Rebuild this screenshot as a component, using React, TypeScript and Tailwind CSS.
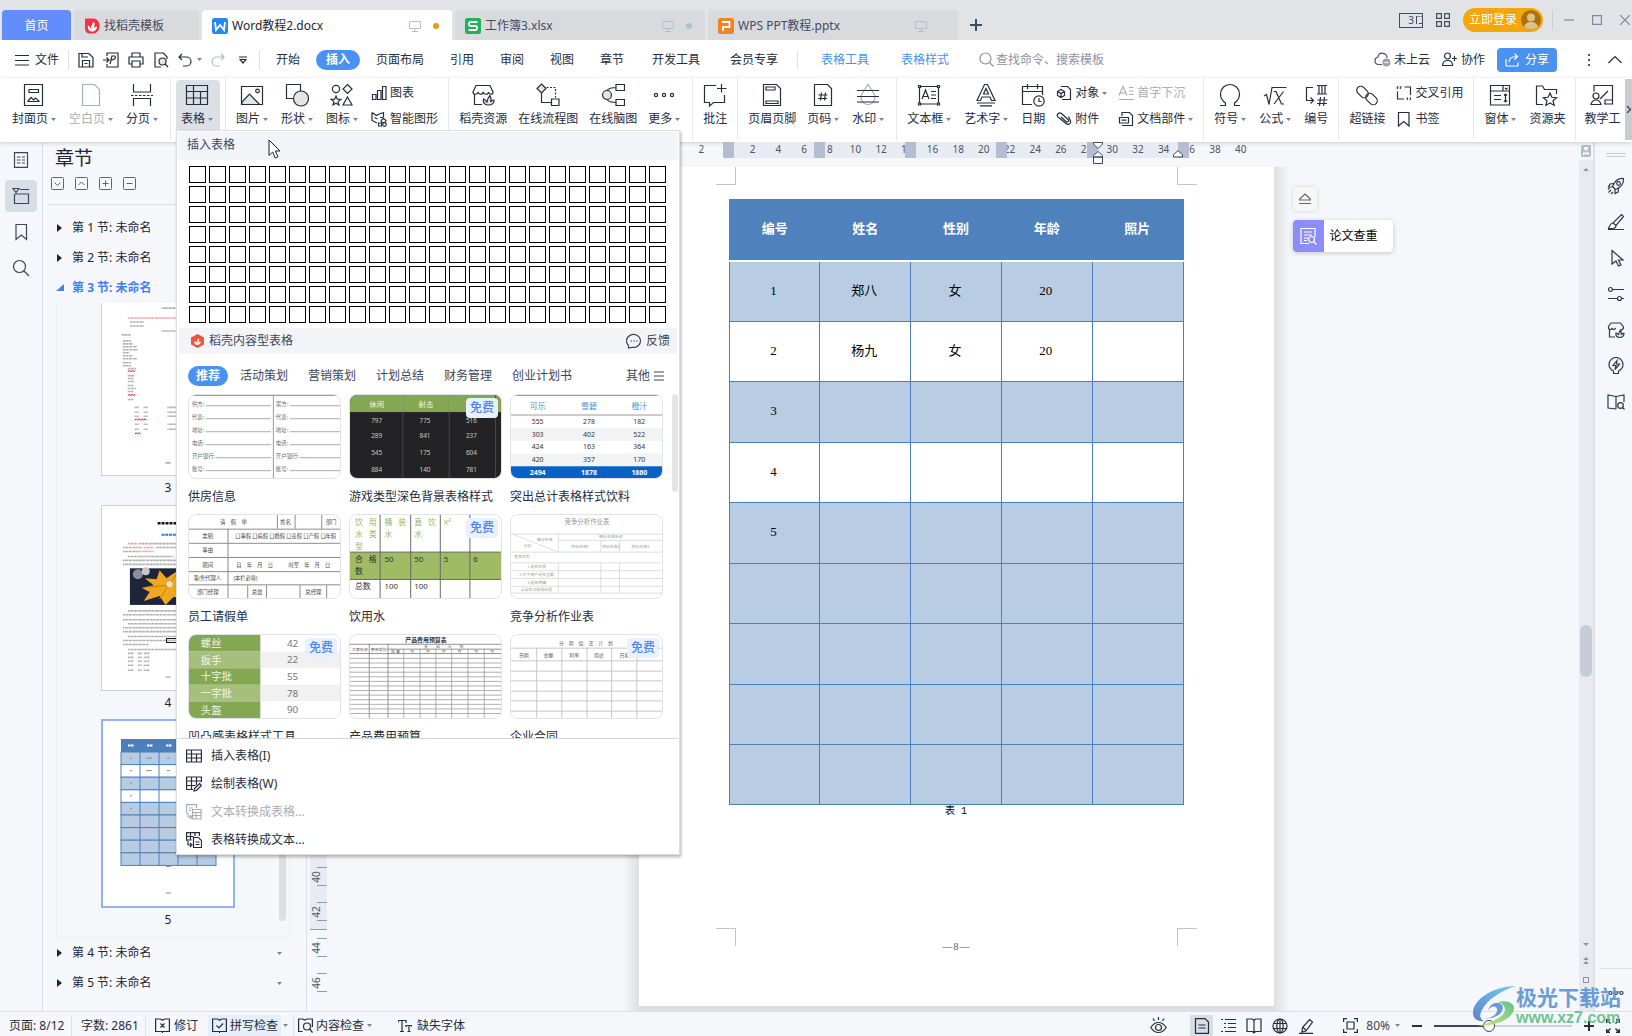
import React, { useState } from "react";
import type { ReactNode } from "react";

/* ---------- icon helper ---------- */

function Svg({ s = 16, v = 24, w = 1.2, children }: { s?: number; v?: number; w?: number; children: ReactNode }) {
  return (
    <svg width={s} height={s} viewBox={`0 0 ${v} ${v}`} fill="none" stroke="currentColor" strokeWidth={w} className="shrink-0" aria-hidden="true">
      {children}
    </svg>
  );
}

const G = "#e2e4e8";

const big: Record<string, ReactNode> = {
  cover: (<><path d="M2.500 1.500h18v21h-18z" /><path d="M7 6.500h9.500v3H7zM6 18l3-3.500 2.500 2.500 2-2 3.500 3v.5H6z" /></>),
  blank: <path d="M3.500 1.500h12l5 5v16h-17z" />,
  breakp: (<><path d="M3.500 1v8h17V1M3.500 23v-7.500h17V23" /><path d="M1 12.500h22" strokeDasharray="2.500 1.500" /></>),
  table: (<><path d="M1.500 2.500h21v19h-21zM1.500 8.500h21M1.500 15h21M8.500 2.500v19M15.500 8.500v13" /></>),
  image: (<><path d="M1.500 3.500h21v18h-21z" /><path d="M2 19l7.500-8 10 10.500H2z" fill={G} /><circle cx="17.500" cy="8" r="1.800" /></>),
  shape: (<><path d="M1.500 1.500h14v14h-14z" fill="#fff" /><circle cx="16" cy="15.500" r="7.500" fill={G} /></>),
  icons: (<><circle cx="6" cy="6" r="3.600" /><path d="M17.500 1.500l4.500 4.500-4.500 4.500L13 6zM17.500 14l4.500 8h-9zM6 13l1.300 3.200 3.500.2-2.700 2.200.9 3.400L6 20.200 3 22l.9-3.400L1.200 16.400l3.500-.2z" /></>),
  shop: (<><path d="M11 21.500H3.500V11M5 2.500h14l3 6.500c0 3-4 3-4.500 0 0 3-4.500 3-5.500 0 0 3-4.500 3-5 0-.5 3-5 3-5 0z" /><path d="M17 22c-4 0-5-3-4.500-6 2 .5 3 2 3.500 3.500 0-3 1-5 3-7 1 2 1.500 4 .5 6.500.8-1.200 2-2 3.500-2 .3 3-1.500 5-6 5z" fill={G} /></>),
  flow: (<><path d="M5.500 1l4.500 4.500-4.500 4.500L1 5.500z" fill={G} /><path d="M5.500 10v9.500H15" /><path d="M10.500 4.500h9v10" strokeDasharray="2 1.500" /><path d="M15.500 16h7.500v6.500h-7.500z" /></>),
  mind: (<><circle cx="6" cy="12" r="4.500" fill={G} /><path d="M6 7.500C8 5 11 4.500 15 4.500M6 16.500c2 2.500 5 3 9 3M15 1.500h8.500v6H15zM15 16.500h8.500v6H15z" /></>),
  more: (<><circle cx="4" cy="12" r="1.600" /><circle cx="12" cy="12" r="1.600" /><circle cx="20" cy="12" r="1.600" /></>),
  comment: <path d="M13 2.500H1.500v17h5V23l4-3.500h11V12M18.500 1v8.500M14 5.500h9.500" />,
  header: (<><path d="M3.500 1.500h13l4 4v17h-17z" /><path d="M6 4h9v3H6zM6 18h12v2.500H6z" /></>),
  pageno: (<><path d="M3.500 1.500h13l4 4v17h-17z" /><path d="M10.500 9.500l-1 8M14.500 9.500l-1 8M7.500 12h9M7 15.500h9" /></>),
  water: (<><path d="M12 1.500c3 5 7 9 7 13a7 7 0 0 1-14 0c0-4 4-8 7-13z" stroke="#aaafb8" /><path d="M1 7.500h22M1 13.500h22M1 19h22" /></>),
  textbox: (<><path d="M2.500 3.500h19v17.500h-19z" /><path d="M1.500 2.500h2v2h-2zM20.500 2.500h2v2h-2zM1.500 20h2v2h-2zM20.500 20h2v2h-2z" fill="#fff" /><path d="M5 16l3.500-9 3.500 9M6.200 13.500h4.600M14 8.500h5M14 12h5M14 15.500h5" /></>),
  wordart: (<><path d="M3 17.500L10.500 1.500h3L21 17.500h-3.500l-1.500-3.500H8l-1.500 3.500zM9.500 11h5L12 5.500z" /><path d="M3 20h18M6 22.800h12" /></>),
  date: (<><path d="M11 21.500H1.500v-18h20V12M1.500 8.500h20M6.500 1v5M16.500 1v5" /><circle cx="18" cy="18" r="5.200" /><path d="M18 15v3.500h2.500" /></>),
  omega: <path d="M2 22.500h5.500v-2.500C4.500 18 2.500 15 2.500 11a9.500 9.500 0 0 1 19 0c0 4-2 7-5 9v2.500H22" />,
  formula: (<><path d="M1 13l2.500-1.500L6 21.500 9 4.500h14.500" /><path d="M10.500 8.500h2.500l5.500 12.500H21M20.500 8.500L11 21" /></>),
  numlist: (<><path d="M9 4.500H2.500v13H9M6.500 14.500l3 3-3 3M13 2.500h10M13 11h10M15 2.500v8.500M18 2.500v8.500M21 2.500v8.500M16.500 14l-1 9M20.500 14l-1 9M13.500 17h10M13 20.500h10" /></>),
  link: (<><rect x="1" y="5" width="13" height="8" rx="4" transform="rotate(45 7.500 9)" /><rect x="10" y="12" width="13" height="8" rx="4" transform="rotate(45 16.500 16)" /></>),
  form: (<><path d="M2.500 2.500h19v19.500h-19zM2.500 8h19M15 2.500V8M17 5l1.200 1.200L19.500 5M6 12.500h7M6 16.500h7M17.500 11v8M16 12.500l1.500-1.500 1.500 1.500M16 17.500l1.500 1.500 1.500-1.500" /></>),
  resfolder: (<><path d="M8 21.500H1.500V3h6l2 3.500h12V11" /><path d="M15 10l1.900 4.300 4.700.4-3.600 3 1.200 4.700L15 20l-4.200 2.400 1.200-4.700-3.600-3 4.700-.4z" fill="#fff" /></>),
  teach: (<><path d="M4 8.500V2.500h18.500V21H14M1 21.500h10c-1-4-3-4.500-5-4.500s-4 .5-5 4.500zM10 16l8-8M15 21v-4h7" /><circle cx="6" cy="13" r="3" /></>),
};

const small: Record<string, ReactNode> = {
  chart: <path d="M1.500 9.500h3.500v5H1.500zM6.500 5.500h3.500v9H6.500zM11.500 1.500H15v13h-3.500z" />,
  smart: (<><path d="M1 1.500l4.500 3 3-1.500 4-1.500v5M1 1.500v8l5 2.500M3.500 6.500l3 1.500M9 6.500h3" /><path d="M10 9.500l2.500-2 2.500 2-1 2h-3zM7.500 12h3v3h-3z" /><circle cx="13.500" cy="13.500" r="1.800" /></>),
  object: (<><path d="M5 1.500h6.500l3 3v10H6" /><path d="M5 4.500l3.500 2v4L5 12.500 1.500 10.500v-4zM1.500 6.500L5 8.500l3.500-2M5 8.500v4" /></>),
  clip: <path d="M12.500 5.500l2 4.500c1 2.500-2.500 4.500-4.500 2.500L2 6c-2-2 1-5.500 3.500-3.500L12 8.500c1.500 1.500-.5 3.500-2 2L5 6" />,
  drop: <path d="M1 10.500L5 1.500l4 9M2.200 8h5.600M11 2.500h4.500M11 6h4.500M11 9.500h4.500M1 14.500h15" />,
  parts: <path d="M4 5V1.500h7.500l3 3v10H4M1.500 6.500h9v5.500h-9zM3.500 9.200h5" />,
  xref: <path d="M2.500 1.500C1 2 1 3 1.500 4M5.500 1.500C4 2 4 3 4.500 4M8.500 2h6v8M1.500 6.500v7.500H8M11 12.500c.8.500.5 1.500 0 2.500M14 12.500c.8.500.5 1.500 0 2.500" />,
  bookmark: <path d="M2.500 1.500h10.500v13.500l-5.200-4.500-5.300 4.500z" />,
};

const Caret = () => (
  <svg width="5" height="3" viewBox="0 0 5 3" className="shrink-0" aria-hidden="true"><path d="M0 0h5L2.500 3z" fill="#7b8496" /></svg>
);

function Big({ icon, label, caret, dim, on }: { icon: string; label: string; caret?: boolean; dim?: boolean; on?: boolean }) {
  const place = on ? "-mx-[5px] -mt-[3px] h-[56px] rounded-sm bg-[#dce0e6] pl-[5px] pr-[7px] pt-[3px]" : caret ? "pr-[2px]" : "";
  return (
    <button className={`flex shrink-0 flex-col items-center gap-1 whitespace-nowrap ${place} ${dim ? "text-[#a9adb5]" : "text-[#262d3d]"}`}>
      <Svg s={24}>{big[icon]}</Svg>
      <span className="flex items-center gap-[3px] leading-4">{label}{caret && <Caret />}</span>
    </button>
  );
}

function Small({ icon, label, caret, dim }: { icon: string; label: string; caret?: boolean; dim?: boolean }) {
  return (
    <button className={`flex items-center gap-[3px] whitespace-nowrap leading-4 ${dim ? "text-[#a9adb5]" : "text-[#262d3d]"}`}>
      <Svg s={16} v={16}>{small[icon]}</Svg>{label}{caret && <Caret />}
    </button>
  );
}

const Group = ({ children }: { children: ReactNode }) => (
  <div className="flex h-[62px] shrink-0 items-start gap-[11px] border-r border-[#e6e8ec] px-[10px] pt-[5px]">{children}</div>
);
const Stack = ({ children }: { children: ReactNode }) => <div className="flex flex-col gap-[10px] pt-[2px]">{children}</div>;

/* ---------- title bar ---------- */

const Monitor = () => (
  <svg width="12" height="12" viewBox="0 0 12 12" fill="none" stroke="#b4bdd2" className="shrink-0" aria-hidden="true"><path d="M.5 1.500h11v7H.5zM6 8.500v3M3 11.500h6" /></svg>
);

const LogoDoc = () => (
  <svg width="16" height="18" viewBox="0 0 16 18" className="shrink-0" aria-hidden="true"><path d="M1 1.500h8c4 0 6.500 3.500 6.500 7.500S13 16.500 9 16.500H6c-3 0-5-2-5-5z" fill="#f5333f" /><path d="M7.500 14.500c-3-.5-4-3-3.500-6 1.500.5 2.500 2 3 3.500 0-3 1-5.500 3-7.500 1 2 .8 4.500-.5 7 .8-1 2-2 3.500-2 0 3-2 5.200-5.500 5z" fill="#fff" /></svg>
);
const LogoW = () => (
  <svg width="16" height="16" viewBox="0 0 16 16" className="shrink-0" aria-hidden="true"><rect width="16" height="16" rx="2.500" fill="#2288f5" /><path d="M3 4l1 8 4-5 4 5 1-8" fill="none" stroke="#fff" strokeWidth="1.800" /></svg>
);
const LogoS = () => (
  <svg width="16" height="16" viewBox="0 0 16 16" className="shrink-0" aria-hidden="true"><rect width="16" height="16" rx="2.500" fill="#1fb356" /><path d="M12.500 4H5.500A1.500 1.500 0 0 0 4 5.500v1A1.500 1.500 0 0 0 5.500 8h5A1.500 1.500 0 0 1 12 9.500v1a1.500 1.500 0 0 1-1.500 1.500h-7" fill="none" stroke="#fff" strokeWidth="1.800" /></svg>
);
const LogoP = () => (
  <svg width="16" height="16" viewBox="0 0 16 16" className="shrink-0" aria-hidden="true"><rect width="16" height="16" rx="2.500" fill="#f5811f" /><path d="M4 4h7.500v5H5v4" fill="none" stroke="#fff" strokeWidth="1.800" /></svg>
);

function FileTab({ logo, name, active, dot }: { logo: ReactNode; name: string; active?: boolean; dot: string }) {
  return (
    <button className={`flex h-[30px] w-[250px] items-center rounded-t pl-[10px] pr-[13px] pt-px ${active ? "bg-white text-[#1d2433]" : "bg-[#d9dade] text-[#414c63]"}`}>
      {logo}
      <span className="ml-1 flex-1 truncate text-left">{name}</span>
      <Monitor />
      <span className={`ml-3 size-[6px] rounded-full ${dot}`} />
    </button>
  );
}

function TitleBar() {
  return (
    <header className="flex h-10 shrink-0 items-end bg-[#e2e3e6] text-[#414c63]">
      <nav className="flex min-w-0 items-end gap-[3px] pl-[2px]">
        <button className="h-[30px] w-[69px] rounded-t bg-[#638dfb] pt-px text-white">首页</button>
        <button className="flex h-[30px] w-[125px] items-center gap-[4px] rounded-t bg-[#d9dade] pl-[10px] pt-px"><LogoDoc />找稻壳模板</button>
        <FileTab logo={<LogoW />} name="Word教程2.docx" active dot="bg-[#e69a0c]" />
        <FileTab logo={<LogoS />} name="工作簿3.xlsx" dot="bg-[#b4bdd2]" />
        <FileTab logo={<LogoP />} name="WPS PPT教程.pptx" dot="bg-transparent" />
        <button aria-label="新建" className="flex h-[30px] w-[30px] items-center justify-center"><Svg s={12} v={12} w={2}><path d="M6 0v12M0 6h12" /></Svg></button>
      </nav>
      <div className="ml-auto flex h-10 items-center">
        <button className="flex h-[15px] w-6 items-center justify-end border border-current text-[10px] leading-none" aria-label="窗口">3<Svg s={8} v={8} w={1}><path d="M2.500-4v16M2.500 0H8M5 7.500h3" /></Svg></button>
        <button aria-label="应用" className="ml-[13px]"><Svg s={14} v={14}><path d="M.6.6h4.800v4.800H.6zM8.600.6h4.800v4.800H8.600zM.6 8.600h4.800v4.800H.6zM8.600 8.600h4.800v4.800H8.600z" /></Svg></button>
        <button className="ml-[13px] flex h-6 items-center gap-[4px] rounded-full bg-[#f4a60b] pl-[6px] pr-[2px] text-white">
          立即登录
          <svg width="20" height="20" viewBox="0 0 20 20" aria-hidden="true"><circle cx="10" cy="10" r="10" fill="#a8730c" /><circle cx="10" cy="7.500" r="4" fill="#dfc08a" /><path d="M3 17c1-4 4-5 7-5s6 1 7 5a10 10 0 0 1-14 0z" fill="#dfc08a" /></svg>
        </button>
        <span className="ml-[9px] h-5 w-px bg-[#cbcdd3]" />
        <div className="flex items-center gap-[18px] pl-[11px] text-[#7e89a5]">
          <button aria-label="最小化"><Svg s={10} v={10}><path d="M0 5h10" /></Svg></button>
          <button aria-label="最大化"><Svg s={10} v={10}><path d="M.6.600h8.800v8.800H.6z" /></Svg></button>
          <button aria-label="关闭" className="pr-[2px]"><Svg s={10} v={10}><path d="M0 0l10 10M10 0L0 10" /></Svg></button>
        </div>
      </div>
    </header>
  );
}

/* ---------- menu row ---------- */

const Bar = () => <span className="h-5 w-px shrink-0 bg-[#dfe1e6]" />;

function MenuRow() {
  return (
    <div className="flex h-[38px] shrink-0 items-center whitespace-nowrap bg-white pt-px text-[#262d3d]">
      <button className="flex items-center gap-[6px] pl-[15px] pr-[9px]"><Svg s={14} v={14}><path d="M0 2.500h14M0 7.500h14M0 12h14" /></Svg>文件</button>
      <Bar />
      <div className="flex items-center gap-[9px] pl-[9px] pr-2">
        <button aria-label="保存"><Svg s={16} v={16}><path d="M1 1.500h10l4 4v9.500H1zM4 1.500v3.500h6M4.500 15V8.500h7V15M6.500 11.500h3" /></Svg></button>
        <button aria-label="输出为PDF"><Svg s={16} v={16}><path d="M4 4V1h11v14H4v-3M0 8h6M3.500 5.500L6 8l-2.500 2.500M7 12l2-8h3c1.500 2-1 4-3.500 4" /></Svg></button>
        <button aria-label="打印"><Svg s={16} v={16}><path d="M4 5V1h8v4M4 12H1V5h14v7h-3M4 9h8v6H4z" /></Svg></button>
        <button aria-label="打印预览"><Svg s={16} v={16}><path d="M14 7V5l-3.500-4H2v14h6" /><circle cx="9.500" cy="9.500" r="3.500" fill={G} /><path d="M12 12l3 3" /></Svg></button>
        <button aria-label="撤销" className="flex items-center gap-[5px]"><Svg s={14} v={14}><path d="M4 1L1 4l3 3M1 4h7.500a4.500 4.500 0 0 1 0 9H5" /></Svg><Caret /></button>
        <button aria-label="恢复" className="text-[#b6bac2]"><Svg s={14} v={14}><path d="M10 1l3 3-3 3M13 4H5.500a4.500 4.500 0 0 0 0 9H9" /></Svg></button>
        <button aria-label="自定义" className="pl-[5px] pr-1"><Svg s={8} v={8}><path d="M0 1h8M1 3.500h6L4 7z" /></Svg></button>
      </div>
      <Bar />
      <nav className="flex items-center pl-[3px]">
        <button className="w-[50px]">开始</button>
        <button className="mx-[3px] h-5 w-[44px] rounded-full bg-[#4991f2] font-bold text-white">插入</button>
        <button className="w-[74px]">页面布局</button>
        <button className="w-[50px]">引用</button>
        <button className="w-[50px]">审阅</button>
        <button className="w-[50px]">视图</button>
        <button className="w-[50px]">章节</button>
        <button className="w-[78px]">开发工具</button>
        <button className="mr-1 w-[78px]">会员专享</button>
        <Bar />
        <button className="ml-[7px] w-[80px] text-[#4991f2]">表格工具</button>
        <button className="w-[80px] text-[#4991f2]">表格样式</button>
      </nav>
      <label className="ml-[14px] flex items-center gap-[2px] text-[#8b93a5]">
        <Svg s={15} v={15}><circle cx="6.500" cy="6.500" r="5.500" /><path d="M10.500 10.500l4 4" /></Svg>
        <input aria-label="查找命令" placeholder="查找命令、搜索模板" className="w-[120px] bg-transparent outline-none placeholder:text-[#8b93a5]" />
      </label>
      <div className="ml-auto flex items-center">
        <button className="flex items-center gap-[3px]">
          <svg width="17" height="15" viewBox="0 0 17 15" fill="none" stroke="#4b556b" strokeWidth="1.200" aria-hidden="true"><path d="M8 12.500H4.500a3.800 3.800 0 0 1-.5-7.500C4.500 2 7 1 9 1.300c3 .4 4 2.700 4 4.700" /><circle cx="12.500" cy="10.500" r="4" fill="#9aa2b3" stroke="none" /><path d="M10.500 10.500h4" stroke="#fff" /></svg>
          未上云
        </button>
        <button className="ml-3 flex items-center gap-1"><Svg s={15} v={15}><circle cx="5.500" cy="4" r="3" /><path d="M.6 13.500c0-4 2-5 5-5s5 1 5 5zM10 6.500h5M12.500 4v5" /></Svg>协作</button>
        <button className="ml-3 flex h-6 items-center gap-[6px] rounded bg-[#4991f2] pl-2 pr-2 text-white"><Svg s={14} v={14}><path d="M1 6v7h12V9.500M4 9c0-4 3-5.500 8-5.500M9.500.8l3 2.700-3 3" /></Svg>分享</button>
        <span className="ml-[15px]"><Bar /></span>
        <button aria-label="更多" className="ml-[15px]"><svg width="4" height="12" viewBox="0 0 4 12" fill="#4b556b" aria-hidden="true"><path d="M1 0h2v2H1zM1 5h2v2H1zM1 10h2v2H1z" /></svg></button>
        <button aria-label="收起功能区" className="ml-[17px] mr-[10px]"><Svg s={14} v={14}><path d="M.5 10L7 3.500l6.500 6.500" /></Svg></button>
      </div>
    </div>
  );
}

/* ---------- ribbon ---------- */

function Ribbon() {
  return (
    <div className="relative flex h-16 shrink-0 bg-white shadow-[0_1px_4px_rgba(0,0,0,0.18)]">
      <div className="flex min-w-0 flex-1 overflow-hidden pl-[2px]">
        <Group><Big icon="cover" label="封面页" caret /><Big icon="blank" label="空白页" caret dim /><Big icon="breakp" label="分页" caret /></Group>
        <Group><Big icon="table" label="表格" caret on /></Group>
        <Group>
          <Big icon="image" label="图片" caret /><Big icon="shape" label="形状" caret /><Big icon="icons" label="图标" caret />
          <Stack><Small icon="chart" label="图表" /><Small icon="smart" label="智能图形" /></Stack>
        </Group>
        <Group><Big icon="shop" label="稻壳资源" /><Big icon="flow" label="在线流程图" /><Big icon="mind" label="在线脑图" /><Big icon="more" label="更多" caret /></Group>
        <Group><Big icon="comment" label="批注" /></Group>
        <Group><Big icon="header" label="页眉页脚" /><Big icon="pageno" label="页码" caret /><Big icon="water" label="水印" caret /></Group>
        <Group>
          <Big icon="textbox" label="文本框" caret /><Big icon="wordart" label="艺术字" caret /><Big icon="date" label="日期" />
          <Stack><Small icon="object" label="对象" caret /><Small icon="clip" label="附件" /></Stack>
          <Stack><Small icon="drop" label="首字下沉" dim /><Small icon="parts" label="文档部件" caret /></Stack>
        </Group>
        <Group><Big icon="omega" label="符号" caret /><Big icon="formula" label="公式" caret /><Big icon="numlist" label="编号" /></Group>
        <Group><Big icon="link" label="超链接" /><Stack><Small icon="xref" label="交叉引用" /><Small icon="bookmark" label="书签" /></Stack></Group>
        <Group><Big icon="form" label="窗体" caret /><Big icon="resfolder" label="资源夹" /></Group>
        <div className="shrink-0 pl-2 pt-[5px]"><Big icon="teach" label="教学工" /></div>
      </div>
      <button aria-label="向右滚动" className="mt-px flex h-[61px] w-[7px] shrink-0 items-center justify-center bg-[#c9cbd0] text-[#3a4254]"><Svg s={7} v={7}><path d="M2 0l3.500 3.500L2 7" /></Svg></button>
    </div>
  );
}

/* ---------- left side ---------- */

function LeftRail() {
  return (
    <nav className="flex w-[43px] shrink-0 flex-col items-center gap-1 border-r border-[#dcdfe5] pt-[2px] text-[#3c465c]">
      <button aria-label="目录" className="flex size-8 items-center justify-center"><Svg s={16} v={16}><path d="M1.500.6h13v14.800h-13zM4 5h3.500M9 5h3M4 8h3.500M9 8h3M4 11h3.500M9 11h3" /></Svg></button>
      <button aria-label="章节" className="flex size-8 items-center justify-center rounded bg-[#d8dde6]"><Svg s={18} v={18}><path d="M1 1.500h6L4 5.500zM8 2.500h9M3 7h13.500v9.500H2.500V7" /></Svg></button>
      <button aria-label="书签" className="flex size-8 items-center justify-center"><Svg s={18} v={18}><path d="M4 1.500h10.500v15l-5.200-4.500L4 16.500z" /></Svg></button>
      <button aria-label="查找" className="flex size-8 items-center justify-center"><Svg s={18} v={18}><circle cx="7.500" cy="7.500" r="6" /><path d="M12 12l5 5" /></Svg></button>
    </nav>
  );
}

const Section = ({ n, open, menu }: { n: number; open?: boolean; menu?: boolean }) => (
  <button className={`flex h-[30px] w-full shrink-0 items-center pl-[13px] pr-6 text-left ${open ? "font-bold text-[#4480f0]" : "text-[#1d2433]"}`}>
    <svg width="8" height="8" viewBox="0 0 8 8" fill="currentColor" className="mr-2" aria-hidden="true"><path d={open ? "M8 0v7H0z" : "M1 0l5 4-5 4z"} /></svg>
    第 {n} 节: 未命名
    {menu && <span className="ml-auto"><Caret /></span>}
  </button>
);

/* Rows of short strokes that stand for the text of a miniature page */
const Lines = ({ rows, c = "#555" }: { rows: [number, number, number][]; c?: string }) => (
  <g stroke={c} strokeWidth="1.600" strokeDasharray="1 .5 .7 .4 1.300 .4" opacity=".55">
    {rows.map(([x, y, w], i) => <path key={i} d={`M${x} ${y}h${w}`} />)}
  </g>
);

const PageThree = () => (
  <svg viewBox="0 0 133 173" className="h-[173px] w-full border border-t-0 border-[#cfd1d5] bg-white" aria-hidden="true">
    <Lines rows={[[60, 5, 20], [28, 19, 14], [28, 23, 14], [60, 28, 14], [20, 32, 9]]} />
    <Lines c="#e33" rows={[[26, 15, 50]]} />
    <Lines rows={[[21, 38, 8], [21, 41, 10], [21, 44, 14], [21, 47, 15], [21, 50, 7], [21, 53, 10], [21, 56, 14], [21, 60, 8], [21, 63, 8], [26, 66, 8], [26, 73, 7], [26, 76, 6], [26, 79, 7], [26, 83, 6], [26, 86, 8], [26, 89, 6], [26, 97, 6]]} />
    <path d="M26 69l1.500-1 1.500 1 1.500-1 1.500 1 1.500-1M26 93l1.500-1 1.500 1 1.500-1 1.500 1 1.500-1M33 118l1.500-1.500 1.500 1.500 1.500-1.500 1.500 1.500 1.500-1.500 1.500 1.500 1.500-1.500 1.500 1.500M33 132l1.500-1.500 1.500 1.500 1.500-1.500 1.500 1.500" stroke="#d11" fill="none" />
    {[105, 110, 114, 122, 127].map((y) => <Lines key={y} rows={[[33, y, 4], [42, y, 4], [66, y, 12]]} />)}
    <path d="M64 161h5" stroke="#777" />
  </svg>
);

const PageFour = () => (
  <svg viewBox="0 0 133 186" className="h-[186px] w-full border border-[#cfd1d5] bg-white" aria-hidden="true">
    <path d="M56 17.500h22" stroke="#111" strokeWidth="2.500" strokeDasharray="3 1" />
    <path d="M60 29h20" stroke="#2a7bd5" strokeWidth="2" strokeDasharray="3 .8" />
    <Lines c="#e33" rows={[[26, 38, 10], [42, 42, 10], [40, 46, 12]]} />
    <Lines rows={[[37, 38, 70], [21, 42, 20], [54, 42, 55], [21, 46, 18], [26, 51, 46], [21, 55, 88], [21, 59, 88]]} />
    <rect x="28" y="63" width="78" height="37" fill="#20243a" />
    <circle cx="36" cy="69" r="5" fill="#8a8f99" /><circle cx="44" cy="66" r="4" fill="#c5c9ce" />
    <path d="M40 83l12-3-9-7 12 1 3-9 7 8 12-8-1 12 18-4-12 12 8 9-18-2-8 8-6-9-16 5 6-9z" fill="#f0a81f" />
    <path d="M47 82l20-2-9 14M67 80l9-12" stroke="#c77812" fill="none" />
    <circle cx="68" cy="79" r="3" fill="#e9e4d8" />
    <Lines rows={[[26, 106, 80], [21, 110, 88], [21, 115, 70], [26, 119, 80], [21, 123, 88], [21, 127, 60], [26, 132, 80], [21, 136, 88], [21, 140, 26], [26, 145, 60]]} />
    {[149, 153, 157, 161, 166].map((y) => <Lines key={y} rows={[[26, y, 6], [36, y, 4], [42, y, 6]]} />)}
    <rect x="65" y="134" width="14" height="4" fill="none" stroke="#111" />
    <path d="M64 173h5" stroke="#999" />
  </svg>
);

const PageFive = () => (
  <svg viewBox="0 0 130 185" className="h-[189px] w-full border-2 border-[#8fb2f8] bg-white" aria-hidden="true">
    <rect x="18" y="18" width="95" height="13" fill="#4c80bc" />
    {[0, 1, 2, 3, 4, 5, 6, 7, 8].map((r) => <rect key={r} x="18" y={31 + r * 12.6} width="95" height="12.6" fill={r === 1 || r === 3 ? "#fff" : "#b7cbe3"} stroke="#4c80bc" />)}
    {[37, 56, 75, 94].map((x) => <path key={x} d={`M${x} 31v113.400`} stroke="#4c80bc" />)}
    {[25, 44, 63, 82, 101].map((x) => <path key={x} d={`M${x} 24.500h6`} stroke="#fff" strokeWidth="2" strokeDasharray="2.500 .5" />)}
    {[0, 1, 2, 3, 4].map((r) => <path key={r} d={`M27 ${37 + r * 12.6}h2`} stroke="#8a8fa0" />)}
    <path d="M43 37h6M43 49.600h6M64 37h3M64 49.600h3M63 145.500h5M63 172h5" stroke="#8a8fa0" />
  </svg>
);

function ChapterPanel() {
  return (
    <aside className="flex w-[264px] shrink-0 flex-col border-r border-[#dcdfe5] text-[#1d2433]">
      <h2 className="h-8 pl-[12px] text-[19px] leading-8">章节</h2>
      <div className="mt-[3px] flex gap-[11px] pl-2 text-[#5b6478]">
        {[["展开", "M3.500 5.500l3 3 3-3"], ["收起", "M3.500 8l3-3 3 3"], ["新增", "M6.500 3.500v6M3.500 6.500h6"], ["删除", "M3.500 6.500h6"]].map(([l, d]) => (
          <button key={l} aria-label={l}><Svg s={13} v={13} w={1}><rect x=".5" y=".5" width="12" height="12" rx="1" /><path d={d} /></Svg></button>
        ))}
      </div>
      <div className="ml-[5px] mt-[14px] mb-2 h-px bg-[#dfe2e7]" />
      <Section n={1} /><Section n={2} /><Section n={3} open />
      <div className="relative ml-[13px] mr-4 min-h-0 flex-1 overflow-hidden border border-t-0 border-[#eceef2]">
        <div className="ml-11 w-[134px] text-center leading-[23px]">
          <PageThree />3
          <div className="mt-[6px]"><PageFour />4</div>
          <div className="mt-[5px]"><PageFive />5</div>
        </div>
        <span className="absolute bottom-4 right-[3px] h-[200px] w-[7px] rounded-full bg-[#dcdee2]" />
      </div>
      <Section n={4} menu />
      <Section n={5} menu />
      <div className="h-[13px] shrink-0" />
    </aside>
  );
}

/* ---------- document ---------- */

const Tick = ({ n }: { n: number }) => (
  <div className="flex h-[35px] items-center justify-end">
    <span className="flex h-[19px] w-[10px] items-center justify-center border-y border-[#8d9ab0]"><span className="-translate-x-1.5 -rotate-90">{n}</span></span>
  </div>
);

const rulerMarks = ["2", "", ...Array.from({ length: 20 }, (_, i) => String(2 * i + 2))];

function Ruler() {
  return (
    <div className="grid h-[25px] shrink-0 grid-cols-[1fr_635px_1fr] pl-[6px]">
      <span />
      <div className="relative h-4">
        <div className="ml-[84px] h-full w-[466px] bg-[#e8ebf2]" />
        <div className="absolute inset-y-0 left-[50px] grid w-[565px] grid-cols-[repeat(22,1fr)] text-center text-[10px] leading-[14px] text-[#4b556b]">
          {rulerMarks.map((m, i) => <span key={i}>{m}</span>)}
        </div>
        <div className="absolute inset-y-0 left-[84px] flex w-[466px] justify-between">
          {[0, 1, 2, 3, 4, 5].map((i) => <span key={i} className="w-[11px] bg-[#b7bdd0]" />)}
        </div>
        <svg className="absolute left-[454px] top-0" width="10" height="22" viewBox="0 0 10 22" fill="#fff" stroke="#3c465c" aria-hidden="true"><path d="M.5.5h9v1.500L5 6.500.5 2zM5 9.500l4.500 4v1.500h-9v-1.500zM.5 15h9v6.500h-9z" /></svg>
        <svg className="absolute left-[534px] top-[8px]" width="10" height="8" viewBox="0 0 10 8" fill="#fff" stroke="#3c465c" aria-hidden="true"><path d="M5 .7l4.500 4v2.300h-9V4.700z" /></svg>
      </div>
    </div>
  );
}

const records = [["1", "郑八", "女", "20", ""], ["2", "杨九", "女", "20", ""], ["3"], ["4"], ["5"], [], [], [], []];

function Page() {
  return (
    <article className="flex flex-col bg-white px-[77px] text-black">
      <div className="flex h-[18px] shrink-0 justify-between">
        <span className="w-5 border-b border-r border-[#c2c4c8]" /><span className="w-5 border-b border-l border-[#c2c4c8]" />
      </div>
      <div className="mt-[14px] px-[13px]">
        <table className="w-full table-fixed border-collapse border border-[#4c80bc] text-center font-['Liberation_Serif','Noto_Sans_CJK_SC',serif] text-[13px]">
          <thead>
            <tr className="border-b-2 border-b-white bg-[#4f81bd] text-white">
              {["编号", "姓名", "性别", "年龄", "照片"].map((h) => <th key={h} className="h-[61px] p-0 pb-[3px] font-bold">{h}</th>)}
            </tr>
          </thead>
          <tbody>
            {records.map((r, i) => (
              <tr key={i} className={i === 1 || i === 3 ? "bg-white" : "bg-[#b8cce4]"}>
                {[0, 1, 2, 3, 4].map((c) => <td key={c} className={`${i % 2 === 0 && i < 8 ? "h-[61px]" : "h-[60px]"} border-x border-b border-[#4c80bc] p-0 pb-[2px] pr-[2px]`}>{r[c]}</td>)}
              </tr>
            ))}
          </tbody>
        </table>
      </div>
      <p className="text-center font-['Liberation_Mono','Noto_Sans_CJK_SC',monospace] text-[10px] leading-[14px]">表 1</p>
      <div className="mb-[60px] mt-auto flex h-[18px] shrink-0 justify-between">
        <span className="w-5 border-r border-t border-[#c2c4c8]" />
        <p className="flex h-0 items-center gap-px self-end font-['Liberation_Serif',serif] text-[10px] text-[#555]"><span>—</span><span>8</span><span>—</span></p>
        <span className="w-5 border-l border-t border-[#c2c4c8]" />
      </div>
    </article>
  );
}

function Canvas() {
  return (
    <main className="flex min-w-0 flex-1 flex-col">
      <Ruler />
      <div className="grid min-h-0 flex-1 grid-cols-[1fr_16px_635px_16px_1fr] pl-[6px]">
        <span /><span className="bg-linear-to-l from-[#dddfe2] to-[#f5f7fa]" />
        <Page />
        <span className="bg-linear-to-r from-[#dddfe2] to-[#f5f7fa]" />
        <div className="flex flex-col items-start gap-[9px] pl-[3px] pt-5">
          <button aria-label="收起" className="flex size-6 items-center justify-center rounded-sm bg-[#f6f6f7] text-[#666] shadow-[0_0_4px_rgba(0,0,0,0.15)]"><Svg s={12} v={12}><path d="M6 1l5.300 5v1H.700V6zM0 10.500h12" /></Svg></button>
          <button className="flex h-8 w-[100px] items-center overflow-hidden rounded-sm bg-white text-black shadow-[0_1px_5px_rgba(0,0,0,0.2)]">
            <span className="flex h-8 w-[31px] items-center justify-center bg-[#8c8cfb] text-white"><Svg s={17} v={17}><path d="M9 15.500H1v-15h14V9M4 4h8M4 7h8M4 10h4M4 12.500h3" /><circle cx="11.500" cy="11.500" r="3" /><path d="M14 14l2.500 2.500" /></Svg></span>
            <span className="ml-[6px]">论文查重</span>
          </button>
        </div>
      </div>
      <div className="grid h-[5px] shrink-0 grid-cols-[1fr_16px_635px_16px_1fr] pl-[6px]">
        <span />
        <span className="bg-linear-to-l from-[#dddfe2] to-[#f5f7fa]" />
        <span className="bg-[#dcdee1]" />
        <span className="bg-linear-to-r from-[#dddfe2] to-[#f5f7fa]" />
        <span />
      </div>
    </main>
  );
}

function ScrollColumn() {
  return (
    <div className="flex w-[16px] shrink-0 flex-col items-center border-r-2 border-[#dfe1ea] text-[#8a94ad]">
      <svg width="10" height="12" viewBox="0 0 10 12" className="my-[3px] shrink-0" aria-hidden="true"><rect width="10" height="12" rx="1.500" fill="#b7bdd0" /><path d="M3 2h4v2L5 6 3 4zM2 7.500h6V10H6.500V9h-3v1H2z" fill="#fff" /></svg>
      <div className="flex w-full flex-1 flex-col items-center bg-[#e9eaf0]">
        <svg width="6" height="3" viewBox="0 0 6 3" className="mt-2" aria-hidden="true"><path d="M0 3l3-3 3 3z" fill="currentColor" /></svg>
        <span className="flex-1" />
        <span className="h-[52px] w-3 rounded-full bg-[#c8cbd8]" />
        <span className="flex-1 basis-[-190px] grow-[0.58]" />
        <svg width="8" height="62" viewBox="0 0 8 62" fill="currentColor" className="mb-2 shrink-0" aria-hidden="true">
          <path d="M1 2h6L4 5zM1 19l3-3 3 3zM1 23l3-3 3 3zM1 53h6l-3 3zM1 57h6l-3 3z" /><rect x="1.500" y="36.500" width="5" height="5" fill="none" stroke="currentColor" />
        </svg>
      </div>
    </div>
  );
}

function RightRail() {
  const items: [string, ReactNode][] = [
    ["快捷", <><path d="M16.500 1.500c-5-.5-9 3-11 8l3 3c5-2 8.500-6 8-11zM6.500 6.500L3 7 1.500 10h4M11.500 11.500L11 15l-3 1.500v-4M1.500 15.500L4 13M4 17l2-2M1 12.500L2.500 11" /><circle cx="11.500" cy="6.500" r="1.800" /></>],
    ["样式", <><path d="M14.500 1.500l2 2L9 12.500 6 10zM6 10c-2.500 0-3 2-4.500 5.500h5c2-.5 2.500-1.500 2.500-3M1 16.500h16" /></>],
    ["选择", <path d="M5 1.500l11 9.500h-4.500l2.500 5-2.500 1L9 12l-4 3z" />],
    ["设置", <><circle cx="3.500" cy="4.500" r="2" /><circle cx="12.500" cy="13.500" r="2" /><path d="M5.500 4.500H17M1 13.500h9.500M14.500 13.500H17" /></>],
    ["稻壳", <><path d="M8 16H2.500V9M4 2h9.500l3 4c0 2-1.500 3-3 3M4 2L1.500 5.500C1 9 4.500 9.500 5 7c.5 2 3 2 3.500 0" /><path d="M12.500 16.500c-3 0-4-2-3.500-4.500 1.500.2 2.200 1 2.500 2 0-2 .8-3.500 2-5 .8 1.500 1 3 .5 4.500.6-.8 1.500-1.200 3-1.200 0 2.500-1.500 4.200-4.500 4.200z" fill={G} /></>],
    ["灵感", <><path d="M6.500 14C3.500 12.500 2 10 2 7.500a7 7 0 0 1 14 0c0 2.500-1.500 5-4.500 6.500v2.500h-5z" /><path d="M10 3.500L6 8.500h3l-1 4 4.500-5.500h-3z" /></>],
    ["阅读", <><path d="M9 16l-8-1V2l8 1.500L17 2v7M9 3.500V16" /><circle cx="13.500" cy="12.500" r="2.800" /><path d="M15.500 14.500l2 2" /></>],
  ];
  return (
    <nav className="flex w-[37px] shrink-0 flex-col items-center pl-1 text-[#2f384b]">
      <span className="mt-[11px] mb-[13px] h-[4px] w-5 shrink-0 border-y border-[#c9ccd3]" />
      <div className="flex flex-col gap-3 pt-1">
        {items.map(([l, p]) => <button key={l} aria-label={l} className="flex size-6 items-center justify-center"><Svg s={18} v={18}>{p}</Svg></button>)}
      </div>
      <span className="mt-auto h-px w-full bg-[#dfe1e6]" />
      <button aria-label="更多工具" className="mb-[10px] mt-4"><Svg s={16} v={16}><circle cx="2.500" cy="8" r="1.500" /><circle cx="8" cy="8" r="1.500" /><circle cx="13.500" cy="8" r="1.500" /></Svg></button>
    </nav>
  );
}

/* ---------- template thumbnails ---------- */

type T = [string, number, number];
const Txt = ({ items, fs, fill, a = "middle", b }: { items: T[]; fs: number; fill: string; a?: "middle" | "start"; b?: boolean }) => (
  <g fontSize={fs} fill={fill} textAnchor={a} fontWeight={b ? 700 : 400} dominantBaseline="central" stroke="none">
    {items.map(([t, x, y], i) => <text key={i} x={x} y={y}>{t}</text>)}
  </g>
);

const th1 = (
  <>
    {["供方:", "代表:", "地址:", "电话:", "开户银行:", "账号:"].map((t, i) => {
      const y = 9 + i * 13.3;
      const o = i === 4 ? 10 : 0;
      return (
        <g key={t}>
          <Txt items={[[t, 3, y], [t === "供方:" ? "需方:" : t, 88, y]]} fs={5.500} fill="#666" a="start" />
          <path d={`M${17 + o} ${y + 2}H${83}M${102 + o} ${y + 2}H153`} stroke="#aaa" />
        </g>
      );
    })}
    <path d="M85.500 0v85M0 .5h153" stroke="#999" />
  </>
);
const th2 = (
  <>
    <rect width="153" height="85" fill="#232325" /><rect width="153" height="17.500" fill="#84a851" />
    <path d="M53.500 0v85M100.500 0v85M147.500 0v85" stroke="#4a4a4c" /><path d="M53.500 0v17M100.500 0v17" stroke="#a5c07c" />
    <Txt items={[["休闲", 27, 9], ["射击", 77, 9]]} fs={7.500} fill="#f3f6ec" />
    <Txt items={[["797", 27, 26], ["775", 76, 26], ["516", 123, 26], ["289", 27, 42], ["841", 76, 42], ["237", 123, 42], ["545", 27, 59], ["175", 76, 59], ["604", 123, 59], ["884", 27, 76], ["140", 76, 76], ["781", 123, 76]]} fs={6.500} fill="#c8c8c8" />
  </>
);
const th3 = (
  <>
    <path d="M0 .5h153M0 20.500h153" stroke="#999" />
    <rect y="34" width="153" height="13" fill="#f2f3f5" /><rect y="60" width="153" height="13" fill="#f2f3f5" /><rect y="73" width="153" height="12" fill="#0563c8" />
    <Txt items={[["可乐", 27, 11], ["雪碧", 79, 11], ["橙汁", 130, 11]]} fs={8} fill="#3f8fd6" />
    <Txt items={[["555", 27, 27], ["278", 79, 27], ["182", 130, 27], ["303", 27, 40.500], ["402", 79, 40.500], ["522", 130, 40.500], ["424", 27, 53], ["163", 79, 53], ["364", 130, 53], ["420", 27, 66], ["357", 79, 66], ["170", 130, 66]]} fs={7} fill="#333" />
    <Txt items={[["2494", 27, 79], ["1878", 79, 79], ["1860", 130, 79]]} fs={7} fill="#fff" b />
  </>
);
const th4 = (
  <>
    <path d="M0 14.500h153M0 29h153M0 43.500h153M0 58h153M0 71.500h153M89.500 0v14M107.500 0v14M134.500 0v14M39.500 14v71M59.500 72v13M78.500 72v13M112.500 72v13M139.500 72v13" stroke="#8a8a8a" />
    <Txt items={[["请　假　单", 45, 7], ["姓名", 98, 7], ["部门", 144, 7], ["类别", 19, 22], ["事由", 19, 36], ["期间", 19, 51], ["职务代理人", 19, 65], ["部门经理", 19, 79], ["总监", 69, 79], ["总经理", 126, 79]]} fs={5.500} fill="#444" />
    <Txt items={[["口事假 口病假 口婚假 口丧假 口产假 口年假", 47, 22], ["自　年　月　日　　　时至　年　月　日", 48, 51], ["(本栏必填)", 45, 65]]} fs={5.300} fill="#444" a="start" />
  </>
);
const th5 = (
  <>
    <rect y="38" width="153" height="28" fill="#9fbb63" />
    <path d="M30.500 0v85M61.500 0v85M91.500 0v85M121.500 0v85M0 38h153M0 66h153" stroke="#666" />
    <Txt items={[["饮", 5, 7], ["用", 19, 7], ["水", 5, 19], ["类", 19, 19], ["型", 5, 32], ["桶", 35, 7], ["装", 49, 7], ["水", 35, 19], ["直", 65, 7], ["饮", 79, 7], ["水", 65, 19], ["X²", 95, 7]]} fs={8} fill="#96b65e" a="start" />
    <Txt items={[["合", 5, 45], ["格", 19, 45], ["数", 5, 57], ["50", 35, 45], ["50", 65, 45], ["5", 95, 45], ["6", 125, 45], ["总数", 5, 73], ["100", 35, 73], ["100", 65, 73]]} fs={8} fill="#333" a="start" />
  </>
);
const th6 = (
  <>
    <path d="M0 19.500h153M48 26h105M0 38h153M48 19v19M91 26v12M110 26v12M0 19l48 19M0 49h153M0 57h153M0 65h153M0 73h153M0 80h153M48 49v31M91 49v31M110 49v31" stroke="#ddd" />
    <Txt items={[["竞争分析作业表", 77, 7]]} fs={6.500} fill="#999" />
    <Txt items={[["细分市场名称", 101, 22], ["细分市场", 34, 25], ["分析", 17, 31], ["目标市场1", 70, 32], ["目标市场2", 101, 32], ["目标市场3", 131, 32], ["竞争优势", 11, 43], ["1.是否优质", 26, 53], ["2.对于用户是否重要", 26, 61], ["3.是否明确", 26, 69], ["4.是否可获得利润", 26, 76]]} fs={4} fill="#999" />
  </>
);
const th7 = (
  <>
    {[["螺丝", "42"], ["扳手", "22"], ["十字批", "55"], ["一字批", "78"], ["头盔", "90"]].map(([t, n], i) => (
      <g key={t}>
        <rect y={i * 17} width="72.500" height="17" fill={i % 2 ? "#a6bf7c" : "#84a851"} />
        <rect x="72.500" y={i * 17} width="81" height="17" fill={i % 2 ? "#f1f1f1" : "#fff"} />
        <Txt items={[[t, 12, i * 17 + 8.500]]} fs={10.500} fill="#f2f6ea" a="start" />
        <Txt items={[[n, 105, i * 17 + 8.500]]} fs={10} fill="#777" />
      </g>
    ))}
  </>
);
const th8 = (
  <>
    <Txt items={[["产品费用预算表", 77, 5]]} fs={6} fill="#333" b />
    <path d="M0 9.500h153M38 14.500h115M0 19h153M19.500 9v76M38.500 9v76" stroke="#777" strokeWidth=".8" />
    <path d="M54.500 14v71M71 14v71M87 14v71M103 14v71M119.500 14v71M136 14v71M0 24h153M0 28.700h153M0 33.400h153M0 38.100h153M0 42.800h153M0 47.500h153M0 52.200h153M0 56.900h153M0 61.600h153M0 66.300h153M0 71h153M0 75.700h153M0 80.400h153" stroke="#999" strokeWidth=".8" />
    <Txt items={[["方案名称", 10, 15], ["费用类别", 29, 15], ["支　　出　　计　　划", 95, 12], ["预 算", 46, 17], ["月", 63, 17], ["月", 79, 17], ["月", 95, 17], ["月", 111, 17], ["月", 128, 17], ["月", 144, 17]]} fs={4} fill="#555" />
  </>
);
const th9 = (
  <>
    <Txt items={[["分　期　偿　还　计　划", 76, 8]]} fs={5} fill="#666" />
    <Txt items={[["日期", 13, 21], ["金额", 38, 21], ["利率", 64, 21], ["用途", 89, 21], ["日期", 115, 21]]} fs={5} fill="#555" />
    <path d="M0 13.500h153M0 26.500h153M0 37h153M0 47h153M0 57.500h153M0 67.500h153M0 78h153M26 13v72M51.500 13v72M77 13v72M102 13v72M127.500 13v72" stroke="#c6c6c6" />
  </>
);

const templates: { name: string; art: ReactNode; free?: boolean }[] = [
  { name: "供房信息", art: th1 },
  { name: "游戏类型深色背景表格样式", art: th2, free: true },
  { name: "突出总计表格样式饮料", art: th3 },
  { name: "员工请假单", art: th4 },
  { name: "饮用水", art: th5, free: true },
  { name: "竞争分析作业表", art: th6 },
  { name: "凹凸感表格样式工具", art: th7, free: true },
  { name: "产品费用预算", art: th8 },
  { name: "企业合同", art: th9, free: true },
];

/* ---------- insert table menu ---------- */

function TableMenu() {
  const [tab, setTab] = useState(0);
  const actions: [string, ReactNode, boolean?][] = [
    ["插入表格(I)", <path d="M.6 2h14.800v12H.6zM.6 6h14.800M.6 10h14.800M5.500 2v12M10.500 6v8" />],
    ["绘制表格(W)", <><path d="M7 13.500H.6V1h14.800v5M.6 5h14.800M.6 9.500h9M5.500 1v12.500M10.500 1v8" /><path d="M13.500 7.500l2 2-5 5-2.500.5.5-2.500z" fill={G} /></>],
    ["文本转换成表格...", <><path d="M10.500 4V.6H.6v9M3 4h4M3 6.500h2M2 9v4h3M4 11l2 2-2 2M6.500 5.500H15V15H6.500zM6.500 8.500H15M6.500 11.500H15M10 8.500V15" /></>, true],
    ["表格转换成文本...", <><path d="M.6 9V.6h12.800V4M.6 4.500h7M.6 8h5M4.500.6V8M9 .6V4M2 9v4h3M4 11l2 2-2 2M7.500 5.500h5l3 3V15.500h-8zM9.500 10h4M9.500 12.500h4" /></>],
  ];
  return (
    <section className="absolute left-[176px] top-[130px] flex w-[504px] flex-col border border-[#dcdee2] bg-white px-px pt-px text-[#3d465a] shadow-[1px_2px_3px_rgba(0,0,0,0.3)]">
      <h3 className="h-[28px] shrink-0 bg-[#f3f4f7] pl-[9px] leading-[26px]">插入表格</h3>
      <div className="mb-[5px] mt-[6px] grid shrink-0 grid-cols-[repeat(24,17px)] gap-[3px] pl-[11px]">
        {Array.from({ length: 192 }, (_, i) => <span key={i} className="size-[17px] border border-black bg-white" />)}
      </div>
      <div className="mx-px flex h-[26px] shrink-0 items-center bg-[#f3f4f7] pl-3 pr-[7px]">
        <svg width="13" height="14" viewBox="0 0 13 14" aria-hidden="true"><path d="M6.500 0L13 3.500v7L6.500 14 0 10.500v-7z" fill="#f4523b" /><path d="M6 11c-2 0-3-1.500-2.500-4 1 .3 1.800 1 2 2 .2-2 1-3.500 2.200-4.700.8 1.500.6 3-.2 4.500.5-.6 1.200-1 2.200-1C9.700 9.700 8.500 11 6 11z" fill="#fff" /></svg>
        <span className="ml-[5px] flex-1">稻壳内容型表格</span>
        <button className="flex items-center gap-1"><Svg s={16} v={16}><path d="M2.500 12.500A7 6.500 0 1 1 6 14.300L2.500 15z" /><path d="M4.500 8h1.500M7.300 8h1.500M10 8h1.500" /></Svg>反馈</button>
      </div>
      <div className="mt-3 flex h-5 shrink-0 items-center gap-5 pl-[10px] pr-[14px]">
        {["推荐", "活动策划", "营销策划", "计划总结", "财务管理", "创业计划书"].map((t, i) => (
          <button key={t} onClick={() => setTab(i)} className={tab === i ? "-mr-2 h-5 w-10 rounded-full bg-[#4991f2] font-bold text-white" : ""}>{t}</button>
        ))}
        <button className="ml-auto flex items-center gap-1">其他<svg width="10" height="10" viewBox="0 0 10 10" stroke="#9aa1b0" strokeWidth="2" aria-hidden="true"><path d="M0 1h10M0 5h10M0 9h10" /></svg></button>
      </div>
      <div className="flex h-[353px] shrink-0 overflow-hidden border-b border-[#d5d7db] pt-2">
        <div className="grid flex-1 auto-rows-[120px] grid-cols-3 gap-x-2 pl-[10px] pr-[9px]">
          {templates.map((t) => (
            <figure key={t.name} className="relative">
              <svg viewBox="0 0 153 85" preserveAspectRatio="none" className="h-[85px] w-full rounded-lg border border-[#e2e3e6] bg-white" aria-hidden="true">{t.art}</svg>
              {t.free && <span className="absolute right-1 top-1 h-5 w-8 rounded bg-[#e8f1ff] text-center font-medium leading-5 text-[#4a85f5]">免费</span>}
              <figcaption className="mt-[8px] whitespace-nowrap leading-5 text-[#262d3d]">{t.name}</figcaption>
            </figure>
          ))}
        </div>
        <span className="h-[98px] w-[6px] shrink-0 rounded-full bg-[#e3e4e6]" />
      </div>
      <div className="flex flex-col pt-[3px]">
        {actions.map(([label, path, off]) => (
          <button key={label} disabled={off} className={`flex h-7 items-center gap-[9px] pl-2 text-left ${off ? "text-[#a9adb5]" : "text-[#262d3d]"}`}>
            <Svg s={16} v={16}>{path}</Svg>{label}
          </button>
        ))}
      </div>
      <svg width="13" height="20" viewBox="0 0 13 20" className="absolute left-[91px] top-[8px]" aria-hidden="true"><path d="M1 1v15.500l3.700-3.500 2.500 6 2.700-1.200-2.500-5.800H12z" fill="#fff" stroke="#1b2030" /></svg>
    </section>
  );
}

/* ---------- status bar ---------- */

function StatusBar() {
  const [zoom, setZoom] = useState(39);
  return (
    <footer className="flex h-[25px] shrink-0 items-center whitespace-nowrap border-t border-[#dcdfe5] bg-[#f5f7fa] pt-[3px] text-[#262d3d]">
      <span className="w-[71px] pl-[9px]">页面: 8/12</span><Bar />
      <span className="w-[73px] pl-[9px]">字数: 2861</span><Bar />
      <button className="ml-[9px] flex items-center gap-1"><Svg s={15} v={15}><path d="M5.500 1H.6v12.500h13.800V1H9.500M5.500 1l2 1.200L9.500 1M7.500 13.500V15M5.500 5.500l4 4M9.500 5.500l-4 4" /></Svg>修订</button>
      <button className="ml-[10px] flex h-[22px] items-center gap-[3px] bg-[#e5effc] pl-1 pr-[3px]"><Svg s={15} v={15}><path d="M5.500 1H.6v12.500h13.800V1H9.500M5.500 1l2 1.200L9.500 1M7.500 13.500V15M4.500 7.500L7 10l4-4.500" /></Svg>拼写检查</button>
      <button aria-label="拼写检查选项" className="ml-[2px] mr-[5px]"><Caret /></button><Bar />
      <button className="ml-1 flex items-center gap-[3px]"><Svg s={15} v={15}><path d="M4.500 1H.6v12.500h4M9 1h5.400v8M4.500 1l2 1L9 1" /><circle cx="9" cy="8.500" r="3.500" /><path d="M11.500 11l3 3.500" /></Svg>内容检查<Caret /></button>
      <button className="ml-[26px] flex items-center gap-[5px]"><Svg s={14} v={14}><path d="M0 4V1.500h8V4M4 1.500v11M2 12.500h4M8 8V6.500h6V8M11 6.500v6M9.500 12.500h3" /></Svg>缺失字体</button>

      <div className="ml-auto flex items-center">
        <button aria-label="护眼模式"><Svg s={17} v={17}><path d="M.8 10.500C3 7 5.500 5.500 8.500 5.500s5.500 1.500 7.700 5c-2.200 3.500-4.700 5-7.700 5s-5.500-1.500-7.700-5zM8.500 0v3M3 1.500l1.500 2.300M14 1.500l-1.500 2.300" /><circle cx="8.500" cy="10.500" r="3" /></Svg></button>
        <span className="ml-3 mr-[11px]"><Bar /></span>
        <button aria-label="页面视图" className="flex h-[22px] w-[23px] items-center justify-center bg-[#d8dde6]"><Svg s={16} v={16}><path d="M1.500.6H11l3.500 3.500v11.300h-13zM4.500 7h7M4.500 10h7" /></Svg></button>
        <div className="ml-2 flex items-center gap-[10px]">
          <button aria-label="大纲"><Svg s={15} v={15}><path d="M0 1.500h2M4 1.500h11M3 5.500h2M7 5.500h8M3 9.500h2M7 9.500h8M0 13.500h2M4 13.500h11" /></Svg></button>
          <button aria-label="阅读版式"><Svg s={16} v={16}><path d="M1 1h5.500L8 2.500 9.500 1H15v12.500H9.500L8 15l-1.500-1.500H1zM8 2.500V15" /></Svg></button>
          <button aria-label="Web版式"><Svg s={16} v={16}><circle cx="8" cy="8" r="7" /><ellipse cx="8" cy="8" rx="3.200" ry="7" /><path d="M1 5.500h14M1 10.500h14M8 1v14" /></Svg></button>
          <button aria-label="写作模式"><Svg s={16} v={16}><path d="M11.500 1.500l3 2.500-6.500 9-4 1 .5-4.500zM1 15.400h14M5 9.500l3.500 3" /></Svg></button>
        </div>
        <span className="ml-[14px] mr-[15px]"><Bar /></span>
        <button aria-label="适合页宽"><Svg s={15} v={15}><path d="M.6 4V.600H4M11 .6h3.400V4M14.400 11v3.400H11M4 14.400H.6V11M4 4h7v7H4z" /></Svg></button>
        <button className="ml-2 flex items-center gap-[5px] text-[#3d465a]">80%<Caret /></button>
        <button aria-label="缩小" className="ml-3"><Svg s={10} v={10} w={2}><path d="M0 5h10" /></Svg></button>
        <input
          type="range" aria-label="缩放" min={0} max={100} value={zoom} onChange={(e) => setZoom(Number(e.target.value))}
          className="ml-3 h-[2px] w-[138px] appearance-none bg-linear-to-r from-[#3d465a] from-39% to-[#cdd0dc] to-39% [&::-webkit-slider-thumb]:size-3 [&::-webkit-slider-thumb]:appearance-none [&::-webkit-slider-thumb]:rounded-full [&::-webkit-slider-thumb]:border [&::-webkit-slider-thumb]:border-[#3d465a] [&::-webkit-slider-thumb]:bg-white"
        />
        <button aria-label="放大" className="ml-3"><Svg s={10} v={10} w={2}><path d="M5 0v10M0 5h10" /></Svg></button>
        <button aria-label="全屏" className="ml-3 mr-3"><Svg s={14} v={14} w={1.400}><path d="M.7 4V.7H4M10 .7h3.300V4M13.300 10v3.300H10M4 13.300H.7V10M1 1l3.500 3.500M13 1L9.500 4.500M13 13L9.500 9.500M1 13l3.500-3.500" /></Svg></button>
      </div>
    </footer>
  );
}

function Watermark() {
  return (
    <div className="pointer-events-none absolute bottom-[9px] right-[11px] flex items-center opacity-90">
      <svg width="44" height="42" viewBox="0 0 44 42" aria-hidden="true">
        <defs>
          <linearGradient id="sky" x1="0" y1="1" x2="1" y2="0"><stop offset="0" stopColor="#4a78c4" /><stop offset="1" stopColor="#6fc8f0" /></linearGradient>
          <linearGradient id="leaf" x1="0" y1="1" x2="1" y2="0"><stop offset="0" stopColor="#cfe37a" /><stop offset="1" stopColor="#4fbf7c" /></linearGradient>
        </defs>
        <path d="M44 1C22 1 1 14 1 28c0 6 5 9 11 8-4-2-5-6-2-11C15 15 28 6 44 1z" fill="url(#sky)" />
        <path d="M12 33c9 1 14-5 13-9s-7-3-9 2c1-7 10-11 14-6 4 6-6 15-18 13z" fill="#5a90d0" />
        <path d="M26 17c7-2 16 0 16 6 0 9-14 18-37 18 14-3 27-9 28-16 0-4-3-7-7-8z" fill="url(#leaf)" />
      </svg>
      <div className="flex flex-col">
        <span className="text-[21px] font-bold leading-6 text-[#5b94d4]">极光下载站</span>
        <span className="font-['Liberation_Sans',sans-serif] text-[16px] font-bold leading-[18px] text-[#5fc088]">www.xz7.com</span>
      </div>
    </div>
  );
}

export default function App() {
  return (
    <div className="relative flex h-screen flex-col overflow-hidden bg-[#f5f7fa] font-['Noto_Sans','Noto_Sans_CJK_SC',sans-serif] text-[12px]">
      <TitleBar />
      <MenuRow />
      <Ribbon />
      <div className="flex min-h-0 flex-1">
        <LeftRail />
        <ChapterPanel />
        <div className="flex w-5 shrink-0 flex-col pl-[3px] text-[10px] leading-none text-[#4b556b]">
          <div className="flex flex-1 flex-col justify-end border-b border-[#8d9ab0] bg-[#e8ebf2]"><Tick n={40} /><Tick n={42} /></div>
          <Tick n={44} /><Tick n={46} />
          <div className="h-[11px]" />
        </div>
        <Canvas />
        <ScrollColumn />
        <RightRail />
      </div>
      <StatusBar />
      <TableMenu />
      <Watermark />
    </div>
  );
}
